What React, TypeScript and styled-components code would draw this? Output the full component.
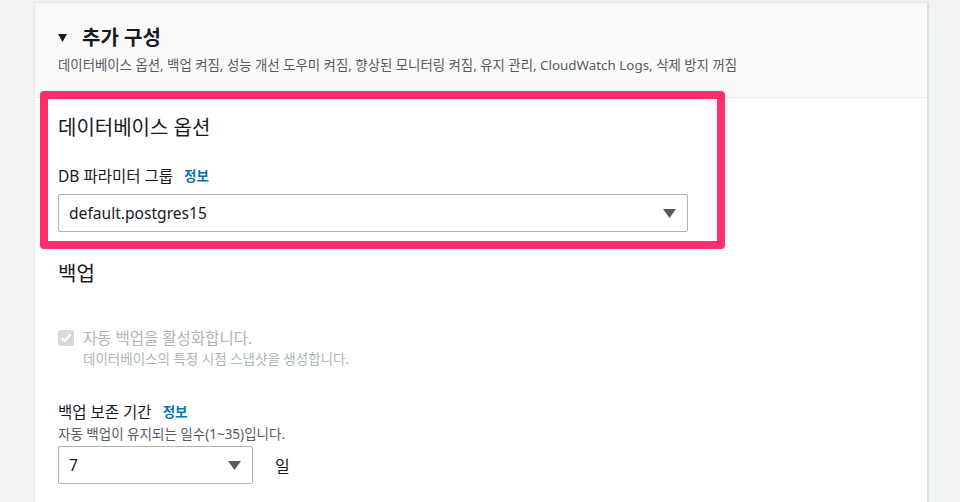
import React from "react";
import styled, { createGlobalStyle } from "styled-components";

const GlobalStyle = createGlobalStyle`
  html, body {
    margin: 0;
    padding: 0;
    background: #f2f3f3;
    font-family: "Noto Sans", "Noto Sans CJK KR", sans-serif;
    color: #16191f;
  }
`;

const Page = styled.div`
  height: 502px;
  overflow: hidden;
  padding-top: 2px;
  box-sizing: border-box;
`;

const Panel = styled.section`
  margin-left: 34px;
  width: 895px;
  min-height: 600px;
  background: #ffffff;
  border: 1px solid #e6e8e8;
  border-right: 2px solid #dcdfdf;
  box-sizing: border-box;
`;

const Header = styled.header`
  background: #fafafa;
  border-bottom: 1px solid #eaeded;
  padding: 23px 23px 24px;
`;

const TitleRow = styled.div`
  display: flex;
  align-items: center;
  gap: 15px;
`;

const Title = styled.h2`
  margin: 0;
  font-size: 20px;
  line-height: 24px;
  font-weight: 700;
`;

const Summary = styled.p`
  margin: 7px 0 0;
  font-size: 13.4px;
  line-height: 16px;
  color: #545b64;
`;

const Body = styled.div`
  padding: 0 23px 40px;
`;

const Highlight = styled.div`
  margin: -7px 0 0 -18px;
  width: 685px;
  box-sizing: border-box;
  border: 8px solid #ff2e6c;
  border-radius: 4px;
  padding: 17px 10px 9px;
`;

const SectionTitle = styled.h3<{ $top?: number }>`
  margin: ${({ $top }) => $top ?? 0}px 0 0;
  font-size: 20px;
  line-height: 24px;
  font-weight: 400;
`;

const Field = styled.div<{ $top: number }>`
  margin-top: ${({ $top }) => $top}px;
`;

const Label = styled.div`
  display: flex;
  align-items: center;
  gap: 11px;
  font-size: 15.5px;
  line-height: 20px;
`;

const Info = styled.a`
  font-size: 13.5px;
  font-weight: 700;
  color: #0073bb;
  text-decoration: none;
`;

const Hint = styled.div<{ $muted?: boolean }>`
  margin-top: ${({ $muted }) => ($muted ? 3 : 4)}px;
  font-size: 13.5px;
  line-height: 16px;
  color: ${({ $muted }) => ($muted ? "#aab7b8" : "#545b64")};
`;

const SelectRow = styled.div`
  display: flex;
  align-items: center;
  gap: 22px;
`;

const Select = styled.div<{ $width: number; $top: number }>`
  margin-top: ${({ $top }) => $top}px;
  width: ${({ $width }) => $width}px;
  height: 38px;
  box-sizing: border-box;
  border: 1px solid #aab7b8;
  border-radius: 2px;
  background: #ffffff;
  display: flex;
  align-items: center;
  justify-content: space-between;
  padding: 0 11px 0 10px;
  font-size: 15.6px;
`;

const Unit = styled.span`
  font-size: 16px;
  margin-top: 4px;
`;

const CheckRow = styled.label`
  display: flex;
  align-items: flex-start;
  gap: 9px;
  margin-top: 42px;
`;

const CheckBox = styled.span`
  width: 16px;
  height: 16px;
  margin-top: 2px;
  border-radius: 2px;
  background: #d5dbdb;
  display: flex;
  align-items: center;
  justify-content: center;
  flex-shrink: 0;
`;

const CheckText = styled.div`
  font-size: 15.5px;
  line-height: 20px;
  color: #aab7b8;
`;

function Caret() {
  return (
    <svg width="13" height="9" viewBox="0 0 13 9">
      <path d="M0 0 H13 L6.5 9 Z" fill="#545b64" />
    </svg>
  );
}

function SelectBox({ value, width, top }: { value: string; width: number; top: number }) {
  return (
    <Select $width={width} $top={top}>
      <span>{value}</span>
      <Caret />
    </Select>
  );
}

export default function App() {
  return (
    <>
      <GlobalStyle />
      <Page>
        <Panel>
          <Header>
            <TitleRow>
              <svg width="9" height="8" viewBox="0 0 9 8">
                <path d="M0 0 H9 L4.5 8 Z" fill="#16191f" />
              </svg>
              <Title>추가 구성</Title>
            </TitleRow>
            <Summary>
              데이터베이스 옵션, 백업 켜짐, 성능 개선 도우미 켜짐, 향상된 모니터링 켜짐, 유지 관리,
              CloudWatch Logs, 삭제 방지 꺼짐
            </Summary>
          </Header>
          <Body>
            <Highlight>
              <SectionTitle>데이터베이스 옵션</SectionTitle>
              <Field $top={26}>
                <Label>
                  DB 파라미터 그룹 <Info>정보</Info>
                </Label>
                <SelectBox value="default.postgres15" width={630} top={8} />
              </Field>
            </Highlight>

            <SectionTitle $top={13}>백업</SectionTitle>
            <CheckRow>
              <CheckBox>
                <svg width="12" height="10" viewBox="0 0 12 10">
                  <path d="M1.5 5 L4.5 8 L10.5 1.5" stroke="#fff" strokeWidth="2" fill="none" />
                </svg>
              </CheckBox>
              <div>
                <CheckText>자동 백업을 활성화합니다.</CheckText>
                <Hint $muted>데이터베이스의 특정 시점 스냅샷을 생성합니다.</Hint>
              </div>
            </CheckRow>

            <Field $top={35}>
              <Label>
                백업 보존 기간 <Info>정보</Info>
              </Label>
              <Hint>자동 백업이 유지되는 일수(1~35)입니다.</Hint>
              <SelectRow>
                <SelectBox value="7" width={195} top={4} />
                <Unit>일</Unit>
              </SelectRow>
            </Field>
          </Body>
        </Panel>
      </Page>
    </>
  );
}
